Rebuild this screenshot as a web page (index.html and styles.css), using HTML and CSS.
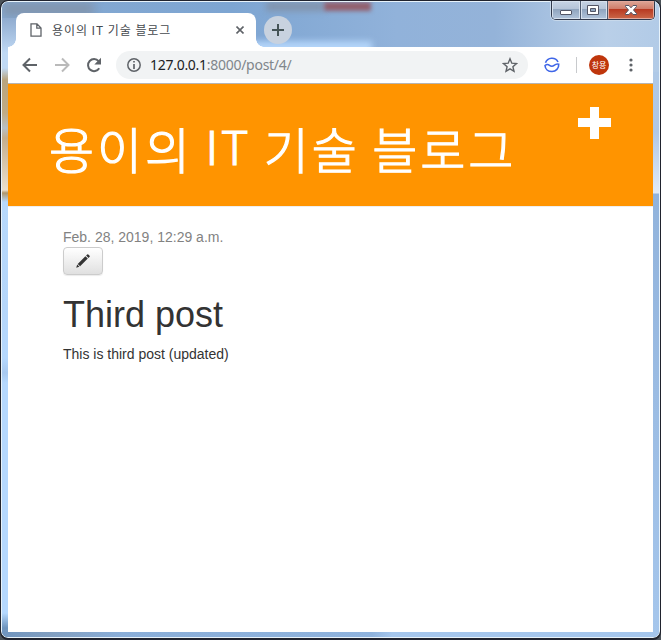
FILE: index.html
```
<!DOCTYPE html>
<html lang="ko">
<head>
<meta charset="utf-8">
<title>용이의 IT 기술 블로그</title>
<link rel="stylesheet" href="styles.css">
</head>
<body>
<div class="window">
  <div class="glass"><i class="blur-a"></i><i class="blur-b"></i><i class="blur-c"></i><i class="blur-d"></i><i class="side-left"></i><i class="side-right"></i></div>
  <div class="controls">
    <span class="ctl min"><svg width="28" height="18" viewBox="0 0 28 18"><rect x="8.500" y="9.500" width="11" height="4" rx=".5" fill="#fff" stroke="#535666"/></svg></span>
    <span class="ctl max"><svg width="26" height="18" viewBox="0 0 26 18"><path fill="#fff" fill-rule="evenodd" stroke="#535666" d="M6.500 4.500h11v9h-11zM9.500 7.500h5v3h-5z"/></svg></span>
    <span class="ctl close"><svg width="46" height="18" viewBox="0 0 46 18"><path d="M17.500 4.500h3.500l2 2.300 2-2.300h3.500v1L25.500 9l3 3.500v1H25l-2-2.300-2 2.300h-3.500v-1l3-3.500-3-3.500z" fill="#fff" stroke="#535666"/></svg></span>
  </div>
  <div class="tabs">
    <div class="tab">
      <svg class="page" width="12" height="14" viewBox="0 0 12 14"><path d="M1 .8h6L11 5v8.200H1zM6.800 1v4.200H11" fill="none" stroke="#5f6368" stroke-width="1.300"/></svg>
      <span class="tab-title">용이의 IT 기술 블로그</span>
      <svg class="tab-close" width="8" height="8" viewBox="0 0 8 8"><path d="M.5.500l7 7M7.500.500l-7 7" stroke="#5f6368" stroke-width="1.600"/></svg>
    </div>
    <div class="new-tab"><svg width="12" height="12" viewBox="0 0 12 12"><path d="M6 0v12M0 6h12" stroke="#455457" stroke-width="2"/></svg></div>
  </div>
  <div class="client">
    <div class="toolbar">
      <svg class="nav" width="16" height="16" viewBox="0 0 16 16"><path d="M15 8H2M8 1.500L1.500 8 8 14.500" fill="none" stroke="#5f6368" stroke-width="2"/></svg>
      <svg class="nav" width="16" height="16" viewBox="0 0 16 16"><path d="M1 8h13M8 1.500L14.500 8 8 14.500" fill="none" stroke="#bababa" stroke-width="2"/></svg>
      <svg class="nav" width="16" height="16" viewBox="0 0 16 16"><path d="M13.200 11.200A6 6 0 1 1 12.600 4.200" fill="none" stroke="#5f6368" stroke-width="2"/><path d="M15 .8v6.700H8.300z" fill="#5f6368"/></svg>
      <div class="address">
        <svg width="14" height="14" viewBox="0 0 14 14"><circle cx="7" cy="7" r="6.200" fill="none" stroke="#5f6368" stroke-width="1.500"/><path d="M7 3v1.600M7 6v5" stroke="#5f6368" stroke-width="1.700"/></svg>
        <span class="url"><b>127.0.0.1</b>:8000/post/4/</span>
        <svg class="star" width="16" height="16" viewBox="0 0 16 16"><path d="M8 1.800l1.800 4.400 4.700.4-3.600 3.100 1.100 4.600L8 11.800l-4 2.500 1.100-4.600-3.600-3.100 4.700-.4z" fill="none" stroke="#5f6368" stroke-width="1.400"/></svg>
      </div>
      <svg class="ext" width="16" height="16" viewBox="0 0 16 16"><path d="M1.500 5.800A6.800 6.800 0 0 1 14 5M1 8.500c2-1.600 3.200-1.200 4.500-.2 2 1.600 3.200 1.200 4.600.1 1.500-1.200 2.700-1.700 4.600-1.200.4 4-2.800 7.300-6.700 7.300S1.200 12 1 8.500z" fill="none" stroke="#3f66e8" stroke-width="1.600"/></svg>
      <i class="divider"></i>
      <span class="avatar">창용</span>
      <svg class="more" width="4" height="14" viewBox="0 0 4 14"><g fill="#5f6368"><circle cx="2" cy="2" r="1.600"/><circle cx="2" cy="7" r="1.600"/><circle cx="2" cy="12" r="1.600"/></g></svg>
    </div>
    <header class="page-header">
      <h1>용이의 <span class="latin">IT</span> 기술 블로그</h1>
      <svg class="plus" width="33" height="32" viewBox="0 0 33 32"><path d="M12 0h9v11h12v9H21v12h-9V20H0v-9h12z" fill="#fff"/></svg>
    </header>
    <main class="post">
      <div class="date">Feb. 28, 2019, 12:29 a.m.</div>
      <a class="btn"><svg width="14" height="14" viewBox="0 0 14 14"><path d="M11.200.400q.6-.5 1.100 0l1.300 1.300q.5.500 0 1.100l-1.100 1.100-2.400-2.400zM9.400 2.200l2.400 2.400-7.700 7.700-2.400-2.400zM1.200 10.600l2.200 2.200-3.200 1z" fill="#333"/></svg></a>
      <h2>Third post</h2>
      <p>This is third post (updated)</p>
    </main>
  </div>
</div>
</body>
</html>
```
FILE: styles.css
```
* { box-sizing: border-box; }
html { height: 640px; overflow: hidden; }
body { margin: 0; background: #4b5258; font-family: "Liberation Sans", Arial, sans-serif; }
.window { position: relative; width: 661px; height: 640px; border: 1px solid #20232e; border-width: 1px 1px 2px; border-radius: 8px; padding: 12px 7px 0; overflow: hidden; }
.glass { position: absolute; inset: 0; border: 1px solid #e8f3fb; border-radius: 7px; overflow: hidden; background: linear-gradient(90deg, #86a9d1 0, #7da5d2 35%, #91b2da 60%, #94b3d9 75%, #b9cfe8 92%, #b2cbe7); }
.glass i { position: absolute; }
.blur-a { left: 0; top: 0; width: 92px; height: 14px; background: #8195ae; filter: blur(5px); }
.blur-b { left: 264px; top: 0; width: 58px; height: 9px; background: #8193ac; filter: blur(3px); }
.blur-c { left: 322px; top: 0; width: 47px; height: 9px; background: #92606e; filter: blur(2px); }
.blur-d { left: 240px; top: 39px; width: 130px; height: 16px; background: #b3d4f9; filter: blur(3px); }
.side-left { left: 0; top: 16px; width: 14px; height: 622px; background: linear-gradient(#8fabcf 0, #c0d9f4 35px, #c0d9f4 50px, #b9a47d 62px, #c0ab85 95px, #b8bfc4 110px, #c3ad8d 120px, #eadfce 172px, #ae966b 175px, #b8d9fc 184px, #b5d6fa 290px, #b5d8fe 340px, #a8c9f0 355px, #b5d8fe 365px, #b5d8fe 595px, #6e94bd 610px, #7fa1c7); }
.side-right { right: 0; top: 70px; width: 6px; height: 568px; background: linear-gradient(#afc9e7 0, #b0c8e7 60px, #e2ebf6 121px, #91b3dc 122px, #9bbce3 320px, #a5c6ec); }
.glass::after { content: ""; position: absolute; left: 0; right: 0; bottom: 0; height: 6px; background: linear-gradient(90deg, #7095bf, #829fc0 50px, #8aaed8 120px, #8fb3dd 370px, #a5c6ec 390px); }
.controls { position: absolute; right: 5px; top: 0; height: 19px; display: flex; border: 1px solid #31394c; border-top: 0; border-radius: 0 0 5px 5px; overflow: hidden; box-shadow: 0 0 0 1px #c8d9eb; }
.ctl { height: 18px; box-shadow: inset 0 0 0 1px #d7e1ed; background: linear-gradient(#c7d4e5 0, #b4c3d7 45%, #8fa4be 46%, #b1c4db); }
.ctl svg { display: block; }
.min, .max { border-right: 1px solid #4e5b70; }
.close { box-shadow: inset 0 0 0 1px #e2a89c; background: linear-gradient(#dda797, #cf7b69 45%, #b83921 46%, #cb6849); }
.tabs { position: relative; height: 34px; display: flex; align-items: flex-start; padding-left: 8px; }
.tab { position: relative; width: 240px; height: 34px; display: flex; align-items: center; padding: 0 12px 0 14px; background: #fff; border-radius: 8px 8px 0 0; }
.tab::before, .tab::after { content: ""; position: absolute; bottom: 0; width: 8px; height: 8px; }
.tab::before { left: -8px; background: radial-gradient(circle at 0 0, transparent 7.5px, #fff 8px); }
.tab::after { right: -8px; background: radial-gradient(circle at 100% 0, transparent 7.5px, #fff 8px); }
.tab-title { margin-left: 10px; font: 12px/16px "Noto Sans CJK KR", sans-serif; letter-spacing: .95px; word-spacing: -.7px; color: #45494e; white-space: nowrap; }
.tab-close { margin-left: auto; }
.new-tab { width: 28px; height: 28px; margin: 3px 0 0 8px; border-radius: 50%; background: #c8d2df; display: flex; align-items: center; justify-content: center; }
.client { position: relative; width: 645px; height: 585px; background: #fff; }
.toolbar { height: 37px; display: flex; align-items: center; padding: 0 16px 1px 14px; border-bottom: 1px solid #b6b4b2; }
.nav { margin-right: 16px; flex: none; }
.address { width: 412px; height: 28px; margin-left: -2px; border-radius: 14px; background: #f1f3f4; display: flex; align-items: center; padding: 0 10px 0 11px; }
.url { margin-left: 9px; font: 14px/20px "Noto Sans", sans-serif; letter-spacing: -.28px; color: #80868b; white-space: nowrap; }
.url b { font-weight: 400; color: #202124; }
.star { margin-left: auto; }
.ext { margin-left: 16px; }
.divider { width: 1px; height: 16px; margin-left: 16px; background: #c8cacd; }
.avatar { width: 20px; height: 20px; margin-left: 12px; border-radius: 50%; background: #bf360c; color: #fff; font: 8px/19px "Noto Sans CJK KR", sans-serif; text-align: center; white-space: nowrap; }
.more { margin-left: auto; margin-right: 4px; }
.page-header { height: 123px; display: flex; justify-content: space-between; align-items: flex-start; padding: 23px 42px 0 41px; background: #ff9400; border-bottom: 1px solid #eee; }
.page-header h1 { margin: 3px 0 0; font: 300 49px/76px "Noto Sans CJK KR", sans-serif; letter-spacing: 2.9px; word-spacing: -4.2px; -webkit-text-stroke: 1.2px #fff; color: #fff; white-space: nowrap; }
.latin { position: relative; top: -4px; font-size: 47px; line-height: 1; }
.post { padding: 20px 55px 0; color: #333; font-size: 14px; line-height: 20px; }
.date { color: #828282; }
.btn { display: flex; align-items: center; justify-content: center; width: 40px; height: 28px; border: 1px solid #ccc; border-radius: 4px; background: linear-gradient(#fff, #e0e0e0); box-shadow: 0 1px 1px rgba(0,0,0,.08); }
.post h2 { margin: 20px 0 10px; font-size: 36px; font-weight: 400; line-height: 39px; }
.post p { margin: 0; }
```
